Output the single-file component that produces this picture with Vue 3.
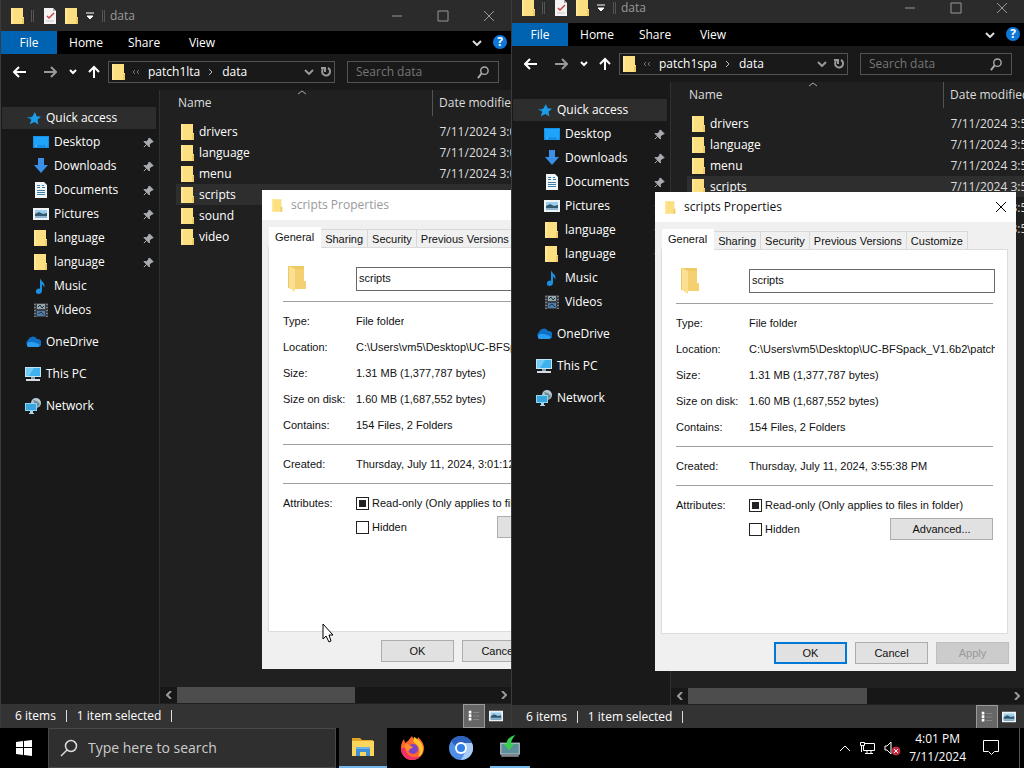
<template>
  <div class="desktop">
    <svg class="defs" aria-hidden="true">
      <symbol id="i-folder" viewBox="0 0 14 16">
        <path d="M0 0h12v9h1v7H0z" fill="#fbdf80" />
        <path d="M0 0h2v16H0z" fill="#ffe898" />
        <path d="M11 10h2v6h-2z" fill="#efcb68" />
      </symbol>
      <symbol id="i-check" viewBox="0 0 14 16">
        <path d="M1 0h9l3 3v13H1z" fill="#f4f2f2" />
        <path d="M10 0v3h3z" fill="#aaa" />
        <path d="M4 8l2 2 5-5" fill="none" stroke="#c4474a" stroke-width="1.500" />
        <path d="M3 13h8" stroke="#c9c9c9" />
      </symbol>
      <symbol id="i-star" viewBox="0 0 16 16">
        <path d="M9 1l2 5 5 .5-4 3.500 1 5.500-4.500-3L3 15l2-5-5-3 6-.5z" fill="#1c9be8" />
        <path d="M0 7l5 0-1 2z" fill="#0f6cae" />
      </symbol>
      <symbol id="i-desktop" viewBox="0 0 16 16">
        <path d="M0 2h16v12H0z" fill="#1590ea" />
        <path d="M1 3h14v8H1z" fill="#1ea4fa" />
        <path d="M2 12h2M13 12h1" stroke="#7fd0ff" />
      </symbol>
      <symbol id="i-downloads" viewBox="0 0 16 16">
        <path d="M5 0h6v7h4l-7 8-7-8h4z" fill="#3a8fe6" />
      </symbol>
      <symbol id="i-documents" viewBox="0 0 16 16">
        <path d="M2 0h9l3 3v13H2z" fill="#f2f5f8" />
        <path d="M4 3.500h3M4 5.500h3M9 3.500h2M9 5.500h3M4 8.500h8M4 10.500h8M4 12.500h8" stroke="#3c7ea8" />
      </symbol>
      <symbol id="i-pictures" viewBox="0 0 16 16">
        <path d="M0 2h16v12H0z" fill="#eef3f6" />
        <path d="M2 4h12v8H2z" fill="#9bcdec" />
        <path d="M2 8l4-2 4 2 4-1v5H2z" fill="#31586e" />
        <path d="M2 10h12v2H2z" fill="#8fb6d0" />
      </symbol>
      <symbol id="i-music" viewBox="0 0 16 16">
        <path d="M7 0c1 4 6 4 4 10 0-3-2-3-2-4v7c0 4-7 4-6 0 0-2 3-3 4-2V0z" fill="#1b8fe0" />
      </symbol>
      <symbol id="i-videos" viewBox="0 0 16 16">
        <path d="M1 1h14v14H1z" fill="#3c3f46" />
        <path d="M4 2h8v5H4z" fill="#93a7ad" />
        <path d="M4 9h8v5H4z" fill="#4a7fae" />
        <path d="M5 5l2-2 2 3 2-2M5 12l3-2 3 3" fill="none" stroke="#263038" />
        <path d="M2 2v13M14 2v13" stroke="#b8bcc4" stroke-dasharray="1 2" />
      </symbol>
      <symbol id="i-onedrive" viewBox="0 0 16 16">
        <path d="M4 13a4 4 0 0 1-1-7 5 5 0 0 1 9-1 4 4 0 0 1 1 8z" fill="#0f6fc4" />
        <path d="M3 13a3 3 0 0 1 1-5l4 0 6 2a2 2 0 0 1-1 3z" fill="#2a9df0" />
      </symbol>
      <symbol id="i-pc" viewBox="0 0 16 16">
        <path d="M0 1h16v10H0z" fill="#bfe6f7" />
        <path d="M1 2h14v8H1z" fill="#3fb2ee" />
        <path d="M1 2h8L4 10H1z" fill="#74cbf5" />
        <path d="M6 11h4v2H6z" fill="#8aa0ac" />
        <path d="M1 13h14v2H1z" fill="#d4dde2" />
      </symbol>
      <symbol id="i-network" viewBox="0 0 16 16">
        <circle cx="11" cy="5" r="5" fill="#b9c9d1" />
        <path d="M8 2l4 1 3 3-2 3-3-2z" fill="#6d8b99" />
        <path d="M0 5h12v8H0z" fill="#8fd3f2" />
        <path d="M1 6h10v6H1z" fill="#3aa5dc" />
        <path d="M5 13h3v2H5zM4 15h5v1H4z" fill="#a9d8ec" />
      </symbol>
      <symbol id="i-pin" viewBox="0 0 12 12">
        <path d="M7 1l4 4-1 1-1 0-2 2v3L4 8 1 11 4 8 1 5h3l2-2 0-1z" fill="#a9adb1" stroke="#a9adb1" />
      </symbol>
      <symbol id="i-search" viewBox="0 0 14 14">
        <circle cx="8" cy="5" r="4" fill="none" stroke="currentColor" stroke-width="1.500" />
        <path d="M5 8l-4 5" stroke="currentColor" stroke-width="2" />
      </symbol>
    </svg>

    <main class="workspace">
      <template v-for="win in windows" :key="win.id">
        <section class="explorer" :class="win.id">
          <header class="titlebar">
            <svg class="folder"><use href="#i-folder" /></svg>
            <span class="grip"></span>
            <svg class="folder check"><use href="#i-check" /></svg>
            <svg class="folder"><use href="#i-folder" /></svg>
            <svg class="qat" viewBox="0 0 8 8"><path d="M0 1h8M1 4h6L4 7z" fill="#fff" stroke="#fff" /></svg>
            <span class="grip second"></span>
            <span class="win-title">data</span>
            <div class="controls">
              <button aria-label="Minimize"><svg viewBox="0 0 12 12"><path d="M1 6h10" /></svg></button>
              <button aria-label="Maximize"><svg viewBox="0 0 12 12"><path d="M1 1h10v10H1z" /></svg></button>
              <button aria-label="Close"><svg viewBox="0 0 12 12"><path d="M1 1l10 10M11 1L1 11" /></svg></button>
            </div>
          </header>

          <nav class="ribbon">
            <button v-for="tab in ribbonTabs" :key="tab" :class="{ file: tab === 'File' }">{{ tab }}</button>
            <button class="expand" aria-label="Expand the ribbon">
              <svg viewBox="0 0 10 6"><path d="M1 1l4 4 4-4" fill="none" stroke="#ddd" stroke-width="2" /></svg>
            </button>
            <button class="help" aria-label="Help">?</button>
          </nav>

          <div class="navbar">
            <button class="arrow" aria-label="Back">
              <svg viewBox="0 0 14 12"><path d="M13 6H2M6 1L1 6l5 5" /></svg>
            </button>
            <button class="arrow dim" aria-label="Forward">
              <svg viewBox="0 0 14 12"><path d="M1 6h11M8 1l5 5-5 5" /></svg>
            </button>
            <button class="recent" aria-label="Recent locations">
              <svg viewBox="0 0 8 6"><path d="M1 1l3 3 3-3" /></svg>
            </button>
            <button class="up" aria-label="Up">
              <svg viewBox="0 0 12 14"><path d="M6 13V2M1 7l5-5 5 5" /></svg>
            </button>
            <div class="address">
              <svg class="folder"><use href="#i-folder" /></svg>
              <svg class="crumb-more" viewBox="0 0 8 6"><path d="M3 1L1 3l2 2M7 1L5 3l2 2" fill="none" stroke="#777" /></svg>
              <span>{{ win.path }}</span>
              <svg class="crumb" viewBox="0 0 5 8"><path d="M1 1l3 3-3 3" fill="none" stroke="#bbb" /></svg>
              <span>data</span>
              <button class="drop" aria-label="Previous locations">
                <svg viewBox="0 0 10 6"><path d="M1 1l4 4 4-4" fill="none" stroke="#999" stroke-width="2" /></svg>
              </button>
              <button class="refresh" aria-label="Refresh">
                <svg viewBox="0 0 12 12">
                  <path d="M8 2a4 4 0 1 1-5 1M1 2h4v4" fill="none" stroke="#999" stroke-width="2" />
                </svg>
              </button>
            </div>
            <label class="search">
              <input type="text" placeholder="Search data" aria-label="Search data">
              <svg><use href="#i-search" /></svg>
            </label>
          </div>

          <div class="content">
            <aside class="sidebar">
              <a
                v-for="(place, i) in places"
                :key="i"
                href="#"
                class="place"
                :class="{ root: place.root, current: i === 0 }"
              >
                <svg class="place-icon"><use :href="'#i-' + place.icon" /></svg>
                <span>{{ place.name }}</span>
                <svg v-if="place.pinned" class="pin"><use href="#i-pin" /></svg>
              </a>
            </aside>
            <div class="files">
              <svg class="sort" viewBox="0 0 8 5"><path d="M0 4l4-3 4 3" fill="none" stroke="#aaa" /></svg>
              <table>
                <thead>
                  <tr>
                    <th class="col-name">Name</th>
                    <th class="col-date">Date modified</th>
                  </tr>
                </thead>
                <tbody>
                  <tr v-for="file in files" :key="file" :class="{ selected: file === 'scripts' }">
                    <td class="cell-name"><svg class="folder"><use href="#i-folder" /></svg>{{ file }}</td>
                    <td class="cell-date">{{ win.date }}</td>
                  </tr>
                </tbody>
              </table>
              <div class="scrollbar">
                <button aria-label="Scroll left"><svg viewBox="0 0 6 8"><path d="M5 0L1 4l4 4" /></svg></button>
                <div class="track"><div class="thumb"></div></div>
                <button aria-label="Scroll right"><svg viewBox="0 0 6 8"><path d="M1 0l4 4-4 4" /></svg></button>
              </div>
            </div>
          </div>

          <footer class="status">
            <span>6 items</span>
            <span>1 item selected</span>
            <button class="view details" aria-label="Details view">
              <svg viewBox="0 0 16 14">
                <path d="M2 1h3v3H2zM2 5h3v3H2zM2 9h3v3H2z" fill="#fff" />
                <path d="M7 3h7M7 7h7M7 11h7" stroke="#8a8a8a" />
              </svg>
            </button>
            <button class="view" aria-label="Large icons view">
              <svg viewBox="0 0 16 16"><use href="#i-pictures" /></svg>
            </button>
          </footer>
        </section>

        <section class="dialog" :class="win.id + '-dialog'">
          <header class="dialog-title">
            <svg class="dialog-icon"><use href="#i-folder" /></svg>
            <h2>scripts Properties</h2>
            <button v-if="win.active" class="dialog-close" aria-label="Close">
              <svg viewBox="0 0 12 12"><path d="M1 1l10 10M11 1L1 11" /></svg>
            </button>
          </header>
          <div class="tabs">
            <button v-for="(tab, i) in dialogTabs" :key="tab" :class="{ active: i === 0 }">{{ tab }}</button>
          </div>
          <div class="pane">
            <div class="row name-row">
              <span class="label">
                <svg class="big-folder" viewBox="0 0 22 28">
                  <path d="M1 1h16v22H1z" fill="#eec966" />
                  <path d="M2 1l6 3v23l-6-4z" fill="#fbe093" />
                  <path d="M8 4h9v12h2v8H8z" fill="#f5d070" />
                </svg>
              </span>
              <input type="text" value="scripts" aria-label="Folder name">
            </div>
            <hr>
            <div v-for="item in details" :key="item[0]" class="row">
              <span class="label">{{ item[0] }}</span>
              <span class="value">{{ item[1] }}</span>
            </div>
            <hr>
            <div class="row">
              <span class="label">Created:</span>
              <span class="value">{{ win.created }}</span>
            </div>
            <hr>
            <div class="row">
              <span class="label">Attributes:</span>
              <label class="tick"><input type="checkbox" class="mixed">Read-only (Only applies to files in folder)</label>
            </div>
            <div class="row last">
              <span class="label"></span>
              <label class="tick"><input type="checkbox">Hidden</label>
              <button class="push advanced">Advanced...</button>
            </div>
          </div>
          <div class="actions">
            <button class="push" :class="{ primary: win.active }">OK</button>
            <button class="push">Cancel</button>
            <button class="push" disabled>Apply</button>
          </div>
        </section>
      </template>

      <svg class="cursor" viewBox="0 0 12 20">
        <path d="M1 1v15l3-3 3 6 2-1-2-6h4z" fill="#fff" stroke="#000" />
      </svg>
    </main>

    <footer class="taskbar">
      <button class="start" aria-label="Start">
        <svg viewBox="0 0 16 16">
          <path d="M0 2l7-1v6H0zM8 1l8-1v7H8zM0 8h7v7l-7-1zM8 8h8v8l-8-1z" fill="#fff" />
        </svg>
      </button>
      <label class="task-search">
        <svg viewBox="0 0 18 18">
          <circle cx="11" cy="7" r="5.500" fill="none" stroke="#ddd" stroke-width="1.500" />
          <path d="M7 11l-6 6" stroke="#ddd" stroke-width="1.500" />
        </svg>
        <input type="text" placeholder="Type here to search" aria-label="Type here to search">
      </label>
      <button class="task open" aria-label="File Explorer">
        <svg viewBox="0 0 24 20">
          <path d="M1 1h8l2 2h11v4H1z" fill="#e0a527" />
          <path d="M1 4h22v15H1z" fill="#fcd65c" />
          <path d="M5 11h14v8h-4v-4H9v4H5z" fill="#3e8fd6" />
          <path d="M5 10h14v2H5z" fill="#69b3ea" />
        </svg>
      </button>
      <button class="task" aria-label="Firefox">
        <svg viewBox="0 0 24 24">
          <path d="M12 24A11 11 0 0 1 1 12c0-4 1-6 3-9l1 4 3-2 4-5 2 4 3 0 1-3c4 4 6 7 6 11a12 12 0 0 1-12 12z" fill="#ff6a2b" />
          <path d="M14 1c4 2 9 6 9 12a10 10 0 0 1-6 9c4-5 3-11-1-14-3-2-3-4-2-7z" fill="#ffc52f" />
          <path d="M1 12c0 7 5 12 11 12 4 0 7-2 8-4-7 3-14 0-15-8z" fill="#f0306a" />
          <circle cx="13" cy="13" r="5" fill="#7b45c9" />
          <path d="M5 8c4 0 5 2 8 3-1 2-4 1-4 4-3-1-5-4-4-7z" fill="#ff8f2a" />
        </svg>
      </button>
      <button class="task" aria-label="Chromium">
        <svg viewBox="0 0 24 24">
          <circle cx="12" cy="12" r="12" fill="#4f8fe6" />
          <path d="M12 0a12 12 0 0 1 11 7H12a5 5 0 0 0-5 4L2 5a12 12 0 0 1 10-5z" fill="#2f62bd" />
          <path d="M23 7a12 12 0 0 1-11 17l5-9c1-3 0-6-2-8z" fill="#a9cbf8" />
          <circle cx="12" cy="12" r="6" fill="#fff" />
          <circle cx="12" cy="12" r="4" fill="#2f7fe6" />
        </svg>
      </button>
      <button class="task running" aria-label="Setup">
        <svg viewBox="0 0 22 22">
          <path d="M2 7h18v11H2z" fill="#c5ced2" />
          <path d="M3 8h16v9H3z" fill="#5c8f9b" />
          <path d="M3 18h16v2H3z" fill="#7e8a90" />
          <path d="M16 0c-5 1-8 4-8 8H5l5 6 5-6h-3c0-3 2-6 4-8z" fill="#35d04c" />
        </svg>
      </button>

      <div class="tray">
        <button aria-label="Show hidden icons">
          <svg class="chevron" viewBox="0 0 12 8"><path d="M1 7l5-5 5 5" /></svg>
        </button>
        <button aria-label="Network">
          <svg class="net" viewBox="0 0 17 14"><path d="M5 2.500h10.500v7H4.500V5M8 10v3M12 10v3M6 12.500h8M1.500 1.500h4v3h-4zM2.500 4v7" /></svg>
        </button>
        <button aria-label="Volume">
          <svg class="volume" viewBox="0 0 17 15">
            <path d="M1 5h2l4-4v12L3 9H1z" />
            <circle cx="12" cy="10" r="4" fill="#c8283c" stroke="#c8283c" />
            <path d="M10 8l4 4M14 8l-4 4" />
          </svg>
        </button>
        <div class="clock"><span>4:01 PM</span><span>7/11/2024</span></div>
        <button class="notify" aria-label="Notifications">
          <svg viewBox="0 0 18 18"><path d="M1.500 1.500h15v11h-4l-3 3-3-3h-5z" /></svg>
        </button>
        <span class="peek"></span>
      </div>
    </footer>
  </div>
</template>

<script setup>
const windows = [
  {
    id: 'left',
    path: 'patch1lta',
    date: '7/11/2024 3:01 PM',
    created: 'Thursday, July 11, 2024, 3:01:12 PM',
    active: false
  },
  {
    id: 'right',
    path: 'patch1spa',
    date: '7/11/2024 3:55 PM',
    created: 'Thursday, July 11, 2024, 3:55:38 PM',
    active: true
  }
]

const ribbonTabs = ['File', 'Home', 'Share', 'View']
const dialogTabs = ['General', 'Sharing', 'Security', 'Previous Versions', 'Customize']
const files = ['drivers', 'language', 'menu', 'scripts', 'sound', 'video']

const places = [
  { name: 'Quick access', icon: 'star', root: true },
  { name: 'Desktop', icon: 'desktop', pinned: true },
  { name: 'Downloads', icon: 'downloads', pinned: true },
  { name: 'Documents', icon: 'documents', pinned: true },
  { name: 'Pictures', icon: 'pictures', pinned: true },
  { name: 'language', icon: 'folder', pinned: true },
  { name: 'language', icon: 'folder', pinned: true },
  { name: 'Music', icon: 'music' },
  { name: 'Videos', icon: 'videos' },
  { name: 'OneDrive', icon: 'onedrive', root: true },
  { name: 'This PC', icon: 'pc', root: true },
  { name: 'Network', icon: 'network', root: true }
]

const details = [
  ['Type:', 'File folder'],
  ['Location:', 'C:\\Users\\vm5\\Desktop\\UC-BFSpack_V1.6b2\\patch1\\data'],
  ['Size:', '1.31 MB (1,377,787 bytes)'],
  ['Size on disk:', '1.60 MB (1,687,552 bytes)'],
  ['Contains:', '154 Files, 2 Folders']
]
</script>

<style>
body {
  margin: 0;
  background: #191919;
}
</style>

<style scoped>
.desktop {
  display: flex;
  flex-direction: column;
  height: 100vh;
  overflow: hidden;
  font: 12px/16px "Open Sans", "Noto Sans", sans-serif;
  color: #fff;
}

.defs {
  position: absolute;
  width: 0;
  height: 0;
}

button,
input {
  font: inherit;
  color: inherit;
  background: none;
  border: none;
  border-radius: 0;
  padding: 0;
  margin: 0;
  outline: none;
}

button {
  display: flex;
  align-items: center;
  justify-content: center;
}

svg {
  flex: none;
}

.workspace {
  position: relative;
  flex: 1;
  overflow: hidden;
}

.folder {
  width: 14px;
  height: 16px;
}

/* explorer windows */
.explorer {
  position: absolute;
  display: flex;
  flex-direction: column;
  box-sizing: border-box;
  border-left: 1px solid #3c3c3c;
  background: #191919;
  overflow: hidden;
}

.explorer.left {
  left: 0;
  top: 0;
  bottom: 0;
  width: 50%;
}

.explorer.right {
  left: calc(50% - 1px);
  top: -8px;
  bottom: -1px;
  right: -1px;
}

.titlebar {
  display: flex;
  align-items: center;
  height: 31px;
  padding-left: 10px;
  background: #2b2b2b;
  color: #999;
}

.grip {
  width: 1px;
  height: 12px;
  margin: 0 9px 0 6px;
  border-left: 1px solid #555;
  border-right: 1px solid #555;
}

.check {
  margin-right: 8px;
}

.qat {
  width: 8px;
  height: 8px;
  margin-left: 7px;
}

.grip.second {
  margin: 0 5px 0 8px;
}

.controls {
  display: flex;
  margin-left: auto;
}

.controls button {
  width: 46px;
  height: 30px;
}

.controls svg {
  width: 12px;
  height: 12px;
  fill: none;
  stroke: #999;
}

.ribbon {
  display: flex;
  align-items: stretch;
  height: 23px;
  background: #000;
}

.ribbon button {
  width: 58px;
}

.ribbon .file {
  width: 56px;
  background: #0063b1;
}

.ribbon .expand {
  width: 20px;
  margin-left: auto;
}

.expand svg,
.drop svg {
  width: 10px;
  height: 6px;
}

.ribbon .help {
  width: 14px;
  height: 14px;
  margin: 4px 5px 0 6px;
  border-radius: 7px;
  background: #0f77d8;
  font-weight: bold;
}

.navbar {
  display: flex;
  align-items: center;
  height: 36px;
  padding: 0 13px 0 12px;
}

.navbar .arrow svg {
  width: 14px;
  height: 12px;
}

.arrow,
.recent,
.up {
  margin-right: 16px;
}

.navbar .dim {
  margin-right: 12px;
}

.navbar .recent {
  margin-right: 11px;
}

.navbar .up {
  margin-right: 8px;
}

.recent svg {
  width: 8px;
  height: 6px;
}

.up svg {
  width: 12px;
  height: 14px;
}

.arrow svg,
.recent svg,
.up svg {
  fill: none;
  stroke: #fff;
  stroke-width: 2;
}

.dim svg {
  stroke: #999;
}

.address,
.search {
  display: flex;
  align-items: center;
  box-sizing: border-box;
  height: 22px;
  border: 1px solid #535353;
}

.address {
  flex: 1;
  padding: 0 2px 0 3px;
}

.crumb-more {
  width: 8px;
  height: 6px;
  margin: 0 8px 0 6px;
}

.crumb {
  width: 5px;
  height: 8px;
  margin: 0 9px 0 8px;
}

.drop {
  margin-left: auto;
}

.refresh {
  margin-left: 6px;
}

.refresh svg {
  width: 12px;
  height: 12px;
}

.search {
  width: 152px;
  margin-left: 12px;
  padding: 0 8px;
}

.search input {
  flex: 1;
  min-width: 0;
}

.search input::placeholder {
  color: #777;
  opacity: 1;
}

.search svg {
  width: 13px;
  height: 13px;
  color: #aaa;
}

.content {
  display: flex;
  flex: 1;
  min-height: 0;
}

.sidebar {
  box-sizing: border-box;
  width: 159px;
  padding: 16px 3px 0 1px;
  border-right: 1px solid #303030;
}

.place {
  display: flex;
  align-items: center;
  height: 24px;
  padding: 0 2px 0 31px;
  color: #fff;
  text-decoration: none;
}

.place.root {
  margin-top: 8px;
  padding-left: 23px;
}

.place.current {
  height: 22px;
  margin: 1px 0;
  background: #2d2d2d;
}

.place-icon {
  width: 16px;
  height: 16px;
  margin-right: 5px;
}

.current .place-icon {
  width: 14px;
  height: 14px;
  margin: 0 5px 0 2px;
}

.pin {
  width: 11px;
  height: 11px;
  margin-left: auto;
}

.files {
  position: relative;
  display: flex;
  flex: 1;
  flex-direction: column;
  min-width: 0;
  overflow: hidden;
  background: #202020;
}

.sort {
  position: absolute;
  left: 138px;
  top: 0;
  width: 8px;
  height: 5px;
}

table {
  width: calc(100% - 16px);
  margin-left: 16px;
  table-layout: fixed;
  border-collapse: collapse;
  text-align: left;
}

th,
td {
  padding: 0;
  font-weight: normal;
  white-space: nowrap;
}

th {
  height: 26px;
  padding-left: 2px;
  color: #ddd;
}

.col-name {
  width: 254px;
}

.col-date {
  padding-left: 6px;
  border-left: 1px solid #535353;
}

tbody::before {
  content: "";
  display: block;
  height: 5px;
}

td {
  height: 21px;
  line-height: 21px;
}

.cell-name .folder {
  margin: 0 4px 0 5px;
  vertical-align: -4px;
}

.cell-date {
  padding-left: 7px;
  color: #ddd;
}

.selected {
  background: #2e2e2e;
}

.scrollbar {
  display: flex;
  height: 16px;
  margin-top: auto;
  margin-bottom: 1px;
  background: #171717;
}

.scrollbar button {
  width: 17px;
}

.scrollbar svg {
  width: 6px;
  height: 8px;
  fill: none;
  stroke: #999;
  stroke-width: 2;
}

.track {
  flex: 1;
}

.thumb {
  width: 56%;
  height: 100%;
  background: #4d4d4d;
}

.status {
  display: flex;
  align-items: center;
  height: 24px;
  padding: 0 5px 0 4px;
  background: #333;
}

.status span {
  padding: 0 10px;
  border-right: 1px solid #ddd;
  line-height: 12px;
}

.status .view {
  box-sizing: border-box;
  width: 22px;
  height: 24px;
}

.view svg {
  width: 14px;
  height: 14px;
}

.status .details {
  margin-left: auto;
  border: 1px solid #999;
  background: #666;
}

/* properties dialogs */
.dialog {
  position: absolute;
  box-sizing: border-box;
  width: 361px;
  padding-bottom: 7px;
  background: #f0f0f0;
  color: #111;
  font: 11px/14px "Liberation Sans", Arial, sans-serif;
}

.left-dialog {
  left: 262px;
  top: 190px;
}

.right-dialog {
  left: 655px;
  top: 192px;
}

.dialog-title {
  display: flex;
  align-items: center;
  height: 30px;
  padding: 0 9px 0 10px;
  background: #fff;
}

.dialog-icon {
  width: 11px;
  height: 13px;
  margin-right: 8px;
}

.dialog-title h2 {
  margin: 0;
  font: 12px/16px "Open Sans", "Noto Sans", sans-serif;
}

.left-dialog h2 {
  color: #999;
}

.dialog-close {
  margin-left: auto;
}

.dialog-close svg {
  width: 12px;
  height: 12px;
  fill: none;
  stroke: #000;
}

.tabs {
  display: flex;
  align-items: flex-end;
  height: 27px;
  padding-left: 7px;
}

.tabs button {
  box-sizing: border-box;
  height: 18px;
  padding: 0 4px;
  border: 1px solid #d9d9d9;
  border-left: none;
  border-bottom: none;
}

.tabs .active {
  position: relative;
  height: 21px;
  margin-bottom: -1px;
  padding: 0 6px 2px;
  border-color: #fff;
  background: #fff;
}

.pane {
  box-sizing: border-box;
  height: 385px;
  margin: 0 8px 0 6px;
  padding: 19px 14px 0;
  border: 1px solid #dcdcdc;
  background: #fff;
}

.row {
  display: flex;
  align-items: center;
  height: 26px;
}

.label {
  flex: none;
  width: 73px;
}

.value {
  overflow: hidden;
  margin-right: -2px;
  white-space: nowrap;
}

.row.name-row {
  height: 24px;
  margin-right: -2px;
}

.name-row input {
  box-sizing: border-box;
  flex: 1;
  min-width: 0;
  height: 24px;
  padding: 0 2px 2px;
  border: 1px solid #6a6a6a;
}

.big-folder {
  display: block;
  width: 22px;
  height: 28px;
  margin-left: 4px;
}

hr {
  height: 1px;
  margin: 6px 0;
  border: none;
  background: #a0a0a0;
}

.name-row + hr {
  margin-top: 10px;
}

.tick {
  display: flex;
  align-items: center;
  white-space: nowrap;
}

.tick input {
  appearance: none;
  box-sizing: border-box;
  width: 13px;
  height: 13px;
  margin-right: 3px;
  padding: 2px;
  border: 1px solid #222;
  background: #fff;
}

.tick .mixed {
  background: #222 content-box;
}

.row.last {
  height: 22px;
}

.push {
  box-sizing: border-box;
  width: 73px;
  height: 22px;
  border: 1px solid #adadad;
  background: #e1e1e1;
}

.push.advanced {
  width: 103px;
  margin-left: auto;
}

.push.primary {
  border: 2px solid #0078d7;
}

.push:disabled {
  border-color: #bfbfbf;
  background: #ccc;
  color: #999;
}

.actions {
  display: flex;
  justify-content: flex-end;
  gap: 8px;
  padding: 8px 7px 0 0;
}

.cursor {
  position: absolute;
  left: 322px;
  top: 623px;
  width: 12px;
  height: 20px;
}

/* taskbar */
.taskbar {
  display: flex;
  flex: none;
  height: 40px;
  background: #000;
}

.start {
  width: 48px;
}

.start svg {
  width: 16px;
  height: 16px;
}

.task-search {
  display: flex;
  align-items: center;
  box-sizing: border-box;
  width: 288px;
  padding-left: 11px;
  border: 1px solid #484848;
  background: #2f2f2f;
}

.task-search svg {
  width: 18px;
  height: 18px;
  margin-right: 10px;
}

.task-search input {
  flex: 1;
  font-size: 14px;
  line-height: 20px;
}

.task-search input::placeholder {
  color: #ccc;
  opacity: 1;
}

.task {
  box-sizing: border-box;
  width: 49px;
  padding: 2px 0;
}

.task svg {
  width: 24px;
  height: 24px;
}

.task.open {
  width: 48px;
  margin-left: 3px;
  border-bottom: 2px solid #76b9ed;
  background: #333;
}

.task.running {
  width: 40px;
  margin-left: 5px;
  border-bottom: 2px solid #76b9ed;
}

.tray {
  display: flex;
  align-items: center;
  gap: 8px;
  margin-left: auto;
}

.tray svg {
  fill: none;
  stroke: #fff;
}

.chevron {
  width: 12px;
  height: 8px;
}

.net {
  width: 17px;
  height: 14px;
}

.volume {
  width: 17px;
  height: 15px;
}

.clock {
  display: flex;
  flex-direction: column;
  align-items: center;
  line-height: 18px;
}

.notify {
  margin: 0 11px 0 8px;
}

.notify svg {
  width: 18px;
  height: 18px;
}

.peek {
  width: 4px;
  height: 40px;
  border-left: 1px solid #555;
}
</style>
